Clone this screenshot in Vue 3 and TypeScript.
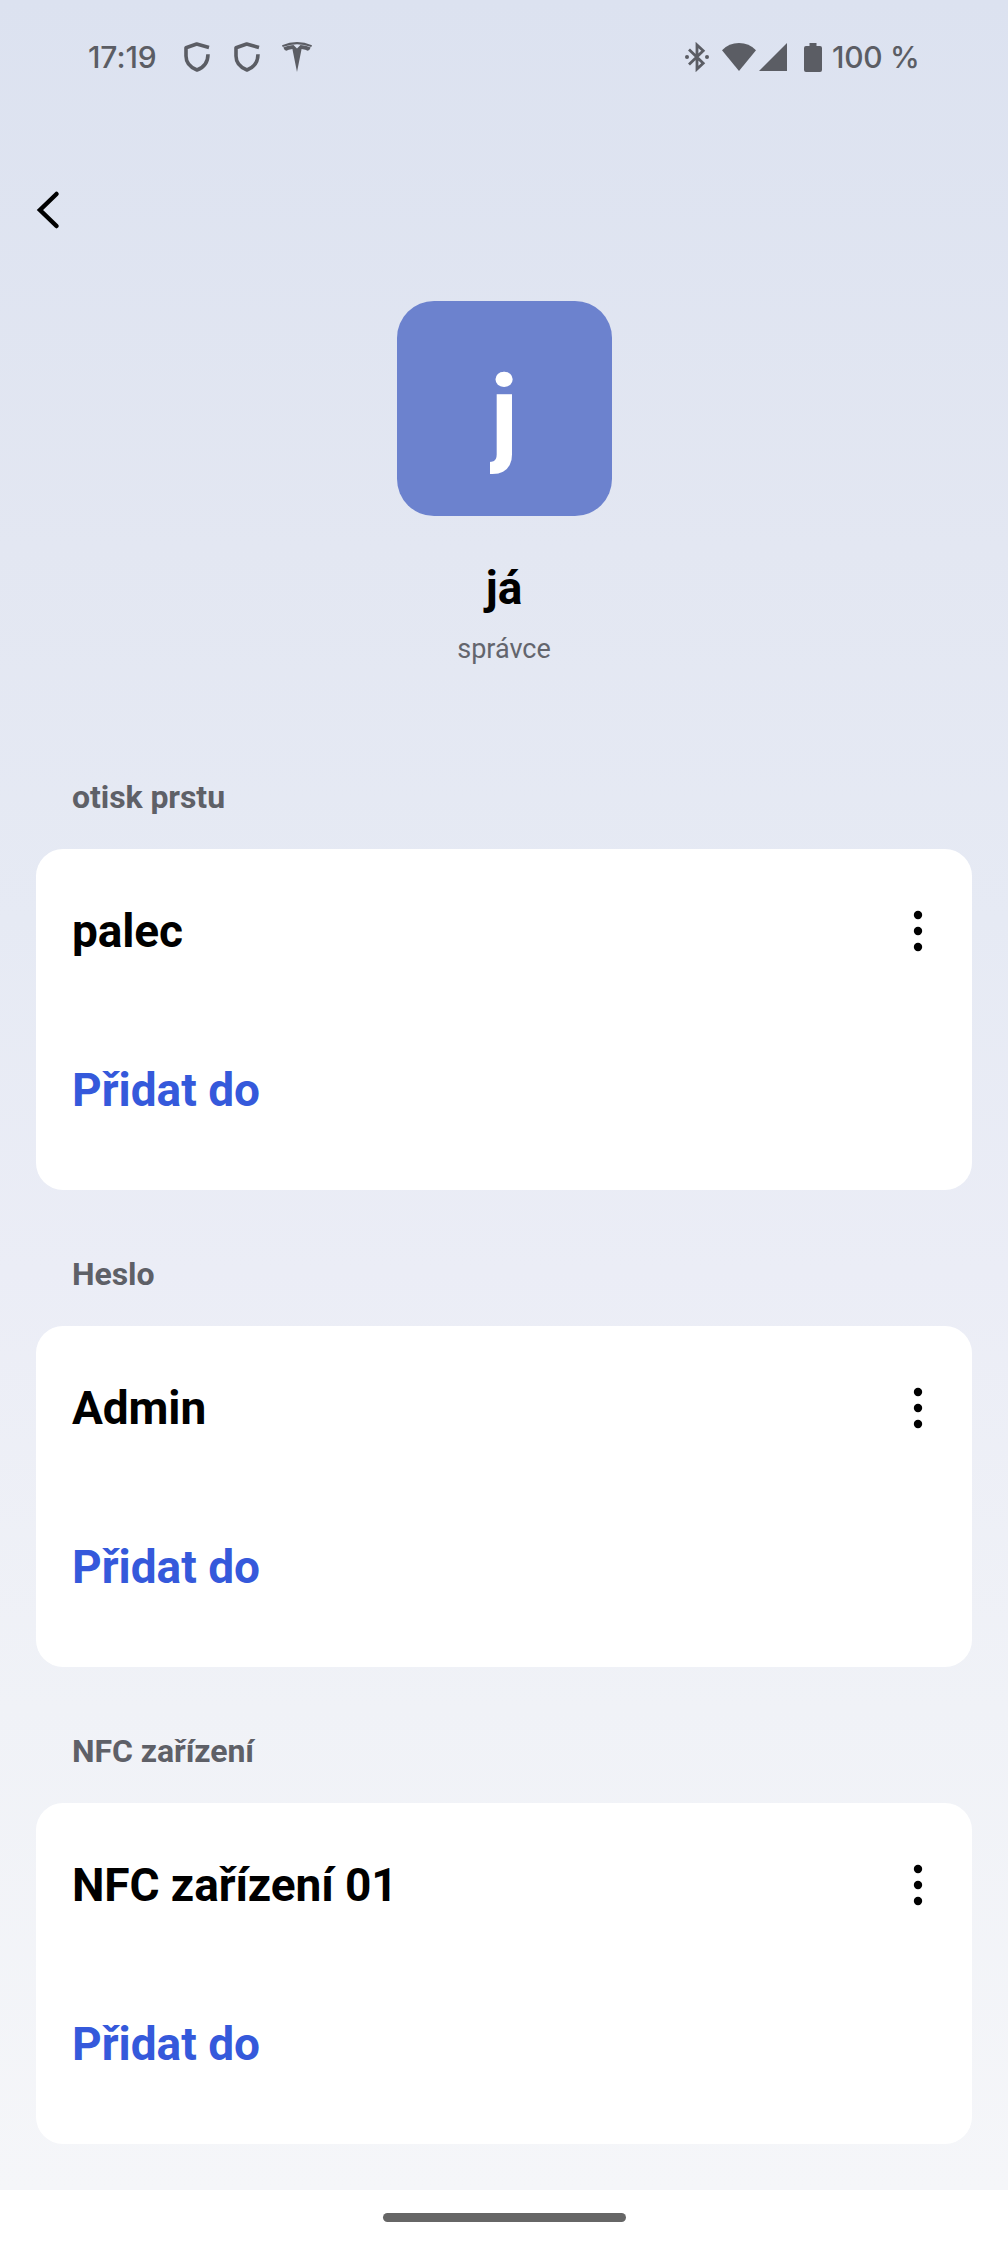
<script setup lang="ts">
interface Section {
  label: string
  entry: string
}

const sections: Section[] = [
  { label: 'otisk prstu', entry: 'palec' },
  { label: 'Heslo', entry: 'Admin' },
  { label: 'NFC zařízení', entry: 'NFC zařízení 01' },
]
</script>

<template>
  <div class="screen">
    <main class="content">
      <header class="status">
        <span class="clock">17:19</span>
        <svg v-for="n in 2" :key="n" class="shield" width="26" height="30" viewBox="0 0 26 30" fill="none" stroke="#5b5d64" stroke-width="3.6">
          <path d="M25 5.4 L12.7 2 L2 5.7 V14 C2 21 6.5 25.5 13 28 C19.5 25.5 24 20.5 24 12.2" stroke-linejoin="round" />
        </svg>
        <svg class="tesla" width="30" height="30" viewBox="0 0 30 30" fill="#5b5d64">
          <path d="M0 3.2 Q15 -3.1 30 3.2 L29.3 4.9 Q15 -0.5 0.7 4.9Z" />
          <path d="M1.3 5.5 Q6 3.2 11.5 3 L15 6.6 L18.5 3 Q24 3.2 28.7 5.5 Q27.8 8.2 25.6 8.8 Q24 7.2 19.6 6.9 L15 30 L10.4 6.9 Q6 7.2 4.4 8.8 Q2.2 8.2 1.3 5.5Z" />
        </svg>
        <span class="spacer"></span>
        <svg class="bt" width="24" height="30" viewBox="0 0 24 30">
          <path d="M4 7.5 L18.2 21.2 L12 27 V3 L18.2 8.8 L4 22.5" fill="none" stroke="#5b5d64" stroke-width="2.8" />
          <circle cx="2" cy="15" r="2" fill="#5b5d64" />
          <circle cx="22" cy="15" r="2" fill="#5b5d64" />
        </svg>
        <svg class="wifi" width="34" height="28" viewBox="0 0 34 28" fill="#5b5d64">
          <path d="M17 28 L0 7.2 Q7 0 17 0 T34 7.2Z" />
        </svg>
        <svg class="cell" width="28" height="28" viewBox="0 0 28 28" fill="#5b5d64">
          <path d="M28 0 V28 H0Z" />
        </svg>
        <svg class="battery" width="18" height="29" viewBox="0 0 18 29" fill="#5b5d64">
          <path d="M5.5 0 H12.5 V3 H16 Q18 3 18 5 V27 Q18 29 16 29 H2 Q0 29 0 27 V5 Q0 3 2 3 H5.5Z" />
        </svg>
        <span class="percent">100 %</span>
      </header>

      <nav class="toolbar">
        <svg width="24" height="40" viewBox="0 0 24 40" fill="none" stroke="#000" stroke-width="4.5" stroke-linecap="round">
          <path d="M20.5 4 L4 20 L20.5 36" />
        </svg>
      </nav>

      <section class="profile">
        <div class="avatar"><span>j</span></div>
        <h1>já</h1>
        <p>správce</p>
      </section>

      <section v-for="s in sections" :key="s.label" class="group">
        <h2>{{ s.label }}</h2>
        <div class="card">
          <div class="row">
            <span>{{ s.entry }}</span>
            <svg width="10" height="42" viewBox="0 0 10 42">
              <circle cx="5" cy="5" r="4.2" />
              <circle cx="5" cy="21" r="4.2" />
              <circle cx="5" cy="37" r="4.2" />
            </svg>
          </div>
          <div class="row add">Přidat do</div>
        </div>
      </section>
    </main>
    <footer class="gesture"><i></i></footer>
  </div>
</template>

<style>
body {
  margin: 0;
}
</style>

<style scoped>
.screen {
  width: 1008px;
  height: 2244px;
  display: flex;
  flex-direction: column;
  overflow: hidden;
  background: #fff;
  font-family: Roboto, sans-serif;
}
.content {
  height: 2190px;
  box-sizing: border-box;
  background: linear-gradient(#dce2f0 0%, #e3e7f2 25%, #e6eaf4 42%, #ebedf6 58%, #f0f2f7 78%, #f5f6f9 100%);
}
.status {
  height: 114px;
  box-sizing: border-box;
  padding: 0 89px 0 88px;
  display: flex;
  align-items: center;
  color: #5b5d64;
  font: 500 30px/40px Inter, sans-serif;
}
.status svg {
  flex: none;
}
.clock {
  width: 96px;
  white-space: nowrap;
  letter-spacing: -0.1px;
}
.shield {
  margin-right: 24px;
}
.tesla {
  margin-left: -2px;
}
.spacer {
  flex: 1;
}
.wifi {
  margin-left: 13px;
}
.cell {
  margin-left: 3px;
}
.battery {
  margin-left: 17px;
}
.percent {
  width: 87px;
  margin-left: 10px;
  white-space: nowrap;
  letter-spacing: -0.3px;
}
.toolbar {
  height: 187px;
  box-sizing: border-box;
  padding: 76px 0 0 36px;
}
.toolbar svg {
  display: block;
}
.profile {
  height: 449px;
  display: flex;
  flex-direction: column;
  align-items: center;
}
.avatar {
  width: 215px;
  height: 215px;
  border-radius: 37px;
  background: #6c82ce;
  color: #fff;
  display: flex;
  justify-content: center;
  font-size: 108px;
  font-weight: 700;
  line-height: 226px;
}
.avatar span {
  overflow: hidden;
}
h1 {
  margin: 45px 0 0;
  font-size: 46px;
  line-height: 54px;
  font-weight: 700;
  color: #000;
}
p {
  margin: 17px 0 0;
  font-size: 27px;
  line-height: 34px;
  color: #63656d;
}
.group {
  height: 477px;
  display: flex;
  flex-direction: column;
}
h2 {
  height: 99px;
  box-sizing: border-box;
  margin: 0 0 0 72px;
  padding-top: 27px;
  font-size: 32px;
  line-height: 40px;
  font-weight: 700;
  letter-spacing: -0.07px;
  color: #5e6067;
}
.card {
  height: 341px;
  margin: 0 36px;
  box-sizing: border-box;
  padding: 52px 49px 0 36px;
  border-radius: 27px;
  background: #fff;
}
.row {
  height: 60px;
  display: flex;
  align-items: center;
  justify-content: space-between;
  font-size: 46px;
  line-height: 60px;
  font-weight: 700;
  letter-spacing: -0.1px;
  color: #000;
}
.add {
  margin-top: 99px;
  letter-spacing: 0;
  color: #3559db;
}
.gesture {
  height: 54px;
  display: flex;
  align-items: center;
  justify-content: center;
}
.gesture i {
  width: 243px;
  height: 9px;
  border-radius: 5px;
  background: #666;
}
</style>
